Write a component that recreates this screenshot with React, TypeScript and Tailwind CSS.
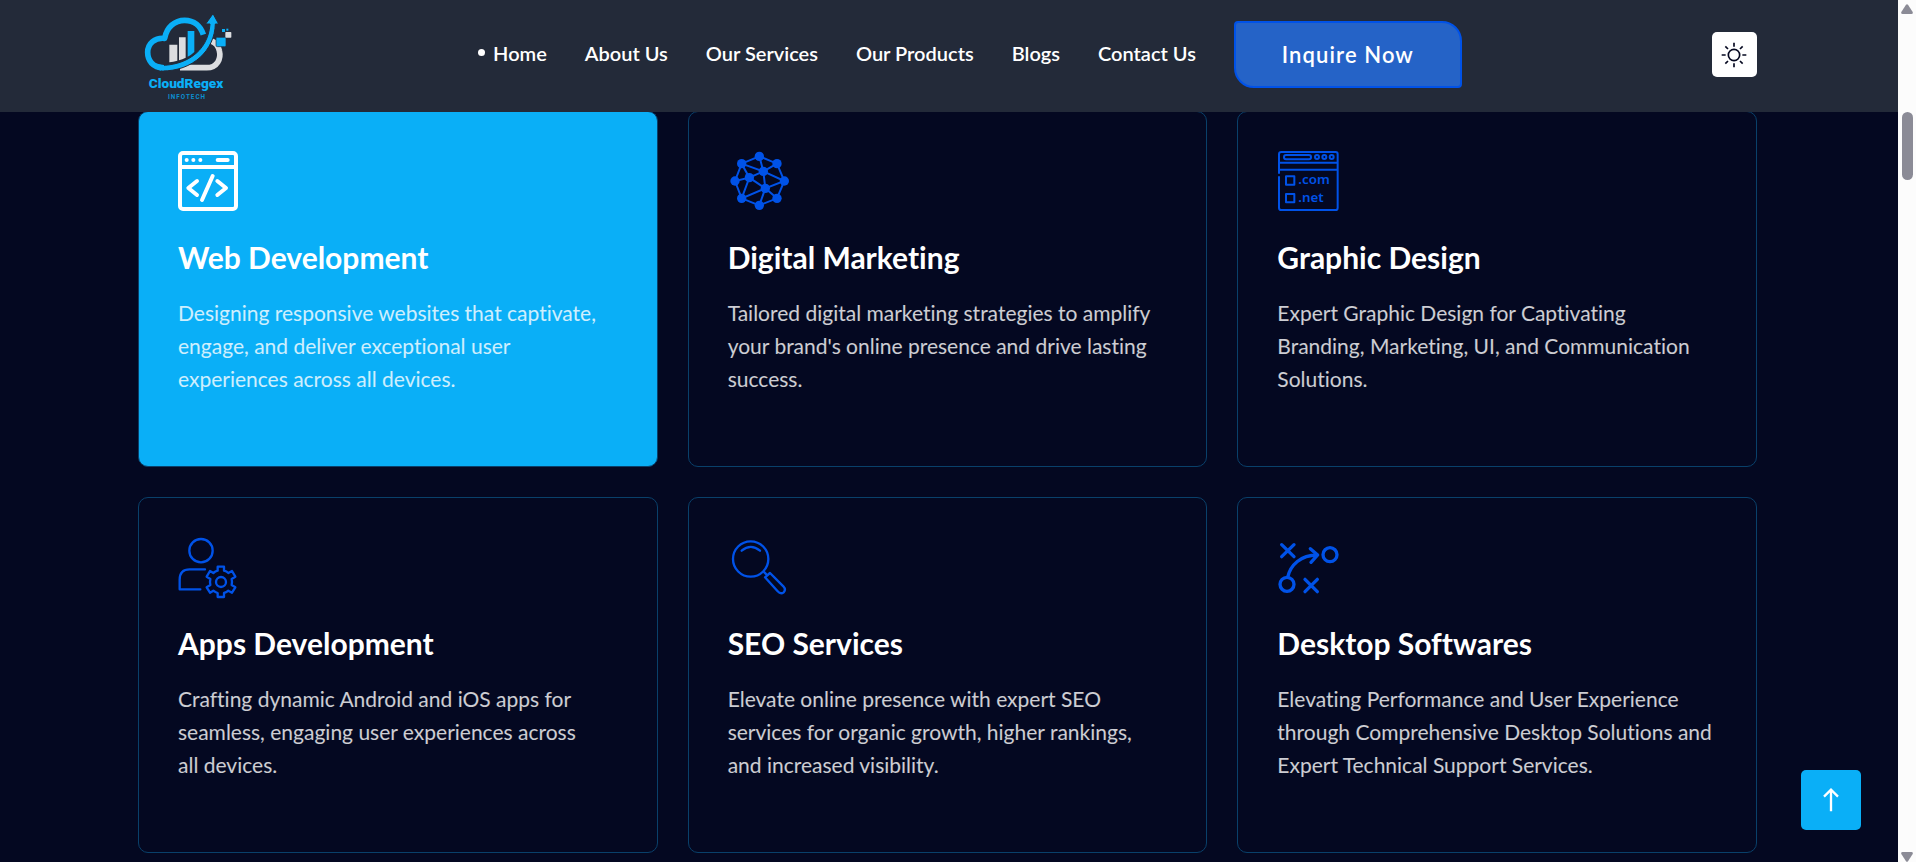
import type { ReactNode } from "react";

const navLinks = ["Home", "About Us", "Our Services", "Our Products", "Blogs", "Contact Us"];

function Logo() {
  return (
    <svg viewBox="42 36 270 270" className="h-[90px] w-[90px]" role="img" aria-label="CloudRegex Infotech">
      <g fill="none">
        <path d="M150 203H230C262 203 274 176 268 152C265 138 257 128 244 123" stroke="#dcdde0" strokeWidth="17" />
        <path d="M100 203C68 203 53 181 53 157C53 130 75 112 104 115C110 82 134 61 164 61C192 61 212 78 220 104" stroke="#0aaff7" strokeWidth="17" strokeLinejoin="round" />
      </g>
      <path d="M118 134h24v48q-12 4-24 5z" fill="#dcdde0" />
      <path d="M147 112h20v61q-10 5-20 8z" fill="#dcdde0" />
      <path d="M173 93h20v63q-9 9-20 14z" fill="#0aaff7" />
      <path d="M94 196C160 196 234 160 240 72H227L249 41L266 72H256C254 150 190 214 94 213Z" fill="#0aaff7" stroke="#232a39" strokeWidth="3" />
      <path d="M94 194.500V211.500C80 211 74 203 76 192Z" fill="#0aaff7" />
      <path d="M90 195h12v16h-12z" fill="#0aaff7" />
      <rect x="258" y="112" width="30" height="28" rx="4" fill="#0aaff7" stroke="#232a39" strokeWidth="2" />
      <rect x="286" y="96" width="18" height="17" rx="2" fill="#dcdde0" />
      <rect x="276" y="87" width="9" height="9" fill="#0aaff7" />
      <rect x="289" y="86" width="6" height="6" fill="#0aaff7" />
      <text x="168" y="264" textAnchor="middle" fontFamily="Roboto, sans-serif" fontWeight="900" fontSize="41" fill="#0aaff7">CloudRegex</text>
      <text x="171" y="297" textAnchor="middle" fontFamily="Roboto, sans-serif" fontWeight="700" fontSize="19" letterSpacing="3" fill="#0b8fd0">INFOTECH</text>
    </svg>
  );
}

function WebIcon() {
  return (
    <svg viewBox="0 0 180 180" className="size-[60px] overflow-visible" fill="none" stroke="currentColor" strokeWidth="12" strokeLinecap="round" strokeLinejoin="round" aria-hidden="true">
      <rect x="6" y="6" width="168" height="168" rx="9" />
      <path d="M6 48H174" />
      <path d="M26 27h.1M46 27h.1M67 27h.1M119 27h30" />
      <path d="M57 90L31 111L57 132M118 90L144 111L118 132M104 75L72 147" />
    </svg>
  );
}

function NetworkIcon() {
  const nodes = [[94, 16], [147, 38], [169, 90], [147, 142], [94, 163], [41, 142], [21, 90], [41, 38], [106, 61], [64, 80], [112, 112]];
  return (
    <svg viewBox="0 0 180 180" className="size-[60px] overflow-visible" fill="none" stroke="currentColor" strokeWidth="6" aria-hidden="true">
      <path d="M94 16L147 38L169 90L147 142L94 163L41 142L21 90L41 38Z" />
      <path d="M41 38L106 61L147 38M94 16L106 61L169 90L112 112L147 142M106 61L112 112L94 163M41 38L64 80L21 90M64 80L106 61M64 80L112 112L41 142Z" />
      {nodes.map(([cx, cy]) => (
        <circle key={`${cx}-${cy}`} cx={cx} cy={cy} r="14" fill="currentColor" stroke="none" />
      ))}
    </svg>
  );
}

function DomainIcon() {
  return (
    <svg viewBox="0 0 180 180" className="size-[60px] overflow-visible" fill="none" stroke="currentColor" strokeWidth="6" strokeLinejoin="round" aria-hidden="true">
      <path d="M6 68V10Q6 3 13 3H176Q182 3 182 10V170Q182 177 176 177H13Q6 177 6 170V76M6 35H182M6 56H182" />
      <rect x="21" y="12" width="81" height="13" rx="6" />
      <circle cx="120" cy="18" r="6" />
      <circle cx="142" cy="18" r="6" />
      <circle cx="164" cy="18" r="6" />
      <rect x="27" y="76" width="25" height="25" />
      <rect x="27" y="129" width="25" height="25" />
      <g fill="currentColor" stroke="none" fontFamily="'Noto Sans', sans-serif" fontWeight="600" fontSize="40">
        <text x="64" y="99">.com</text>
        <text x="64" y="152">.net</text>
      </g>
    </svg>
  );
}

function UserGearIcon() {
  return (
    <svg viewBox="0 0 180 180" className="size-[60px] overflow-visible" fill="none" stroke="currentColor" strokeWidth="7" strokeLinecap="round" strokeLinejoin="round" aria-hidden="true">
      <circle cx="69" cy="41" r="35" />
      <path d="M81 97H35Q5 97 5 128V157H67" />
      <circle cx="129" cy="135" r="15" />
      <path d="M119 89H138V101Q146 103 151 108L162 102L172 119L161 126Q163 135 161 144L172 151L162 167L151 161Q146 166 138 168V180H119V168Q112 166 106 161L96 167L86 151L97 144Q95 135 97 126L86 119L96 102L106 108Q112 103 119 101Z" />
    </svg>
  );
}

function SearchIcon() {
  return (
    <svg viewBox="0 0 180 180" className="size-[60px] overflow-visible" fill="none" stroke="currentColor" strokeWidth="7" strokeLinecap="round" strokeLinejoin="round" aria-hidden="true">
      <circle cx="68" cy="66" r="53" />
      <path d="M41 41Q68 18 96 41" />
      <path d="M107 104L115 112M111 121L126 108L166 148Q175 158 167 166Q158 173 149 163Z" />
    </svg>
  );
}

function StrategyIcon() {
  return (
    <svg viewBox="0 0 180 180" className="size-[60px] overflow-visible" fill="none" stroke="currentColor" strokeWidth="10" strokeLinecap="round" strokeLinejoin="round" aria-hidden="true">
      <path d="M14 23L51 59M51 23L14 59M84 127L121 164M121 127L84 164" />
      <circle cx="159" cy="53" r="21" />
      <circle cx="30" cy="142" r="21" />
      <path d="M32 121C40 84 72 54 120 54M100 35L122 54L102 76" />
    </svg>
  );
}

type Service = { title: string; text: string; icon: ReactNode; active?: boolean };

const services: Service[] = [
  { title: "Web Development", text: "Designing responsive websites that captivate, engage, and deliver exceptional user experiences across all devices.", icon: <WebIcon />, active: true },
  { title: "Digital Marketing", text: "Tailored digital marketing strategies to amplify your brand's online presence and drive lasting success.", icon: <NetworkIcon /> },
  { title: "Graphic Design", text: "Expert Graphic Design for Captivating Branding, Marketing, UI, and Communication Solutions.", icon: <DomainIcon /> },
  { title: "Apps Development", text: "Crafting dynamic Android and iOS apps for seamless, engaging user experiences across all\u00a0devices.", icon: <UserGearIcon /> },
  { title: "SEO Services", text: "Elevate online presence with expert SEO services for organic growth, higher rankings, and increased visibility.", icon: <SearchIcon /> },
  { title: "Desktop Softwares", text: "Elevating Performance and User Experience through Comprehensive Desktop Solutions and Expert Technical Support Services.", icon: <StrategyIcon /> },
];

function ServiceCard({ title, text, icon, active }: Service) {
  return (
    <article className={`min-h-[356px] rounded-[10px] border border-[#09406a] p-[39px] ${active ? "bg-[#0aaff7]" : ""}`}>
      <div className={active ? "text-white" : "text-[#0052e8]"}>{icon}</div>
      <h3 className="mt-7 text-[30px] leading-9 font-bold text-white">{title}</h3>
      <p className="mt-[21px] text-[21px] leading-[33px] text-white/80">{text}</p>
    </article>
  );
}

function Header() {
  return (
    <header className="relative z-10 flex h-28 items-center justify-between bg-[#232a39] pr-[141px] pb-[3px] pl-[144px]">
      <a href="#home" className="mt-1">
        <Logo />
      </a>
      <nav className="mr-1.5 flex items-center gap-[38px] text-[20px] font-semibold text-white" aria-label="Main">
        {navLinks.map((label, i) => (
          <a key={label} href={`#${label.toLowerCase().replace(" ", "-")}`} className="flex items-center gap-2 pb-1 whitespace-nowrap">
            {i === 0 && <span className="size-[7px] rounded-full bg-white" />}
            {label}
          </a>
        ))}
        <button type="button" className="h-[67px] w-[228px] rounded-[4px] rounded-tr-[20px] rounded-bl-[20px] border-2 border-[#0052e8] bg-[#2563c7] text-[22px] font-semibold tracking-wider">
          Inquire Now
        </button>
      </nav>
      <button type="button" aria-label="Toggle theme" className="flex size-[45px] items-center justify-center rounded-[5px] bg-white text-[#050820]">
        <svg viewBox="0 0 78 78" className="size-[26px]" fill="none" stroke="currentColor" strokeWidth="5" aria-hidden="true">
          <circle cx="39" cy="39" r="17" />
          <path d="M39 2V14M39 64V76M2 39H14M64 39H76M13 13L21 21M57 57L65 65M65 13L57 21M21 57L13 65" />
        </svg>
      </button>
    </header>
  );
}

function ScrollRail() {
  return (
    <div className="flex w-[18px] shrink-0 flex-col items-center bg-[#fcfcfc] text-[#8b8b96]" aria-hidden="true">
      <svg viewBox="0 0 12 10" className="mt-1 h-[10px] w-3" fill="currentColor">
        <path d="M5 .8Q6-.4 7 .8L11.700 8Q12.200 10 10.500 10H1.500Q-.2 10 .3 8Z" />
      </svg>
      <div className="mt-[98px] h-[68px] w-[11px] rounded-full bg-[#8b8b96]" />
      <svg viewBox="0 0 12 10" className="mt-auto h-[10px] w-3" fill="currentColor">
        <path d="M5 9.200Q6 10.400 7 9.200L11.700 2Q12.200 0 10.500 0H1.500Q-.2 0 .3 2Z" />
      </svg>
    </div>
  );
}

export default function App() {
  return (
    <div className="flex min-h-screen bg-[#040821] font-['Lato',sans-serif] [font-variant-ligatures:none]">
      <div className="relative min-w-0 flex-1">
        <Header />
        <main className="-mt-px grid grid-cols-3 gap-[30px] pr-[141px] pb-2 pl-[138px]">
          {services.map((service) => (
            <ServiceCard key={service.title} {...service} />
          ))}
        </main>
        <button type="button" aria-label="Back to top" className="absolute right-[37px] bottom-8 flex size-[60px] items-center justify-center rounded-[5px] bg-[#0aaff7] text-white">
          <svg viewBox="0 0 48 72" className="h-6 w-4" fill="none" stroke="currentColor" strokeWidth="7" aria-hidden="true">
            <path d="M24 70V4M3 26L24 5L45 26" />
          </svg>
        </button>
      </div>
      <ScrollRail />
    </div>
  );
}
